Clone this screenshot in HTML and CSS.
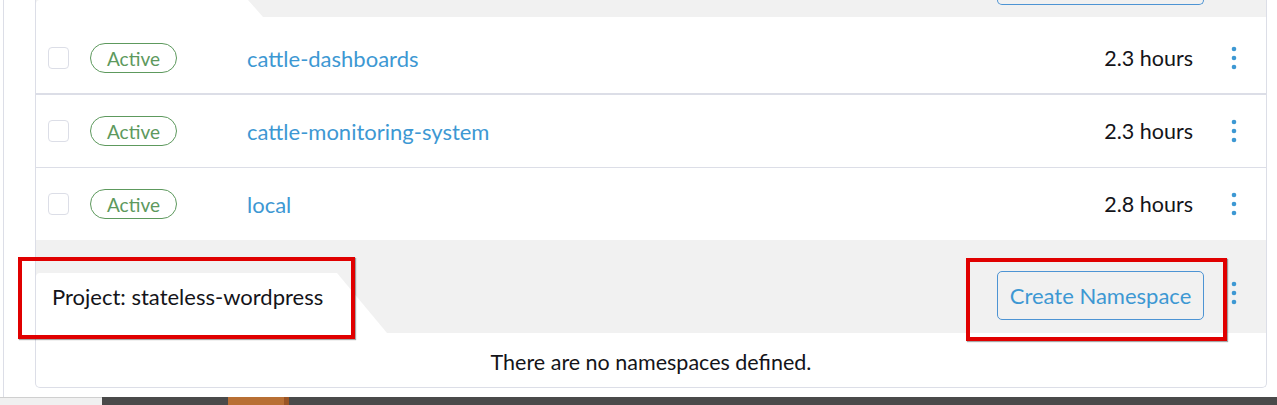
FILE: index.html
```html
<!DOCTYPE html>
<html>
<head>
<meta charset="utf-8">
<link rel="stylesheet" href="styles.css">
</head>
<body>
<div class="main">
  <div class="side"></div>
  <div class="table">
    <div class="group-top">
      <div class="tab tab-small"></div>
      <div class="cut-btn"></div>
      <div class="kebab-space"></div>
    </div>
    <div class="row row-first">
      <span class="check"></span>
      <span class="badge">Active</span>
      <a class="name">cattle-dashboards</a>
      <span class="age">2.3 hours</span>
      <span class="kebab"><svg width="6" height="24" viewBox="0 0 6 24"><circle cx="3" cy="3" r="2.3"/><circle cx="3" cy="12" r="2.3"/><circle cx="3" cy="21" r="2.3"/></svg></span>
    </div>
    <div class="row">
      <span class="check"></span>
      <span class="badge">Active</span>
      <a class="name">cattle-monitoring-system</a>
      <span class="age">2.3 hours</span>
      <span class="kebab"><svg width="6" height="24" viewBox="0 0 6 24"><circle cx="3" cy="3" r="2.3"/><circle cx="3" cy="12" r="2.3"/><circle cx="3" cy="21" r="2.3"/></svg></span>
    </div>
    <div class="row row-last">
      <span class="check"></span>
      <span class="badge">Active</span>
      <a class="name">local</a>
      <span class="age">2.8 hours</span>
      <span class="kebab"><svg width="6" height="24" viewBox="0 0 6 24"><circle cx="3" cy="3" r="2.3"/><circle cx="3" cy="12" r="2.3"/><circle cx="3" cy="21" r="2.3"/></svg></span>
    </div>
    <div class="group">
      <div class="tab tab-big">Project: stateless-wordpress</div>
      <a class="btn">Create Namespace</a>
      <span class="kebab group-kebab"><svg width="6" height="24" viewBox="0 0 6 24"><circle cx="3" cy="3" r="2.3"/><circle cx="3" cy="12" r="2.3"/><circle cx="3" cy="21" r="2.3"/></svg></span>
    </div>
    <div class="empty">There are no namespaces defined.</div>
  </div>
</div>
<div class="taskbar">
  <div class="tb-light"></div>
  <div class="tb-dark tb-d1"></div>
  <div class="tb-orange"></div>
  <div class="tb-orange2"></div>
  <div class="tb-dark tb-d2"></div>
</div>
<div class="mark mark-left"></div>
<div class="mark mark-right"></div>
</body>
</html>
```
FILE: styles.css
```css
* { box-sizing: border-box; }
html, body { margin: 0; padding: 0; }
body {
  width: 1277px;
  height: 405px;
  overflow: hidden;
  background: #fff;
  font-family: Lato, "Open Sans", sans-serif;
  color: #141419;
  position: relative;
}
.main {
  display: flex;
  height: 397px;
}
.side {
  width: 32px;
  margin-left: 3px;
  border-left: 1px solid #dcdee7;
}
.table {
  width: 1232px;
  height: 388px;
  border: 1px solid #dcdee7;
  border-top: none;
  border-radius: 0 0 5px 5px;
  display: flex;
  flex-direction: column;
}
.group-top {
  height: 17px;
  background: #f1f1f1;
  display: flex;
  align-items: flex-start;
}
.tab {
  background: #fff;
  border-top-left-radius: 4px;
}
.tab-small {
  width: 227px;
  height: 17px;
  clip-path: polygon(0 0, 212px 0, 100% 100%, 0 100%);
}
.cut-btn {
  margin-left: auto;
  width: 207px;
  height: 5px;
  border: 1px solid #4d94d4;
  border-top: none;
  border-radius: 0 0 5px 5px;
}
.kebab-space { width: 62px; }
.row {
  display: grid;
  grid-template-columns: 42px 157px 1fr auto 73px;
  align-items: center;
  padding-left: 12px;
  height: 73px;
  border-bottom: 1px solid #dcdee7;
  font-size: 22px;
}
.row-first {
  height: 78px;
  padding-top: 6px;
  border-bottom: 2px solid #dcdee7;
}
.row-last {
  height: 72px;
  border-bottom: none;
}
.check {
  width: 21px;
  height: 22px;
  border: 1px solid #dcdee7;
  border-radius: 4px;
  background: #fff;
}
.badge {
  width: 87px;
  height: 30px;
  border: 1px solid #5d995d;
  border-radius: 15px;
  color: #5d995d;
  font-size: 19px;
  display: flex;
  align-items: center;
  justify-content: center;
}
.name {
  color: #3d98d3;
  text-decoration: none;
}
.age {
  text-align: right;
  font-size: 21.5px;
}
.kebab {
  display: flex;
  padding-left: 38px;
  fill: #3d98d3;
}
.group {
  height: 93px;
  background: #f1f1f1;
  display: flex;
  align-items: flex-start;
}
.tab-big {
  margin-top: 33px;
  width: 351px;
  height: 60px;
  padding: 11px 0 0 16px;
  font-size: 22px;
  line-height: 26px;
  clip-path: polygon(0 0, 301px 0, 100% 100%, 0 100%);
}
.btn {
  margin-left: auto;
  margin-top: 31px;
  width: 207px;
  height: 49px;
  border: 1px solid #4d94d4;
  border-radius: 5px;
  color: #3d98d3;
  font-size: 22px;
  display: flex;
  align-items: center;
  justify-content: center;
}
.group-kebab {
  width: 62px;
  padding-left: 27px;
  margin-top: 41px;
}
.empty {
  flex: 1;
  display: flex;
  align-items: center;
  justify-content: center;
  padding-top: 3px;
  font-size: 21.5px;
}
.taskbar {
  display: flex;
  height: 8px;
}
.tb-light {
  width: 102px;
  background: #f0f0f0;
  border-top: 1px solid #cfcfcf;
}
.tb-dark { background: #4a4a4a; }
.tb-d1 { width: 126px; }
.tb-orange { width: 56px; background: #b86f34; }
.tb-orange2 { width: 5px; background: #9a5424; }
.tb-d2 { flex: 1; }
.mark {
  position: absolute;
  border: 4px solid #e00000;
  box-shadow: 1px 1px 1px rgba(0,0,0,0.35);
}
.mark-left { left: 18px; top: 257px; width: 337px; height: 82px; }
.mark-right { left: 966px; top: 258px; width: 261px; height: 83px; }
```
